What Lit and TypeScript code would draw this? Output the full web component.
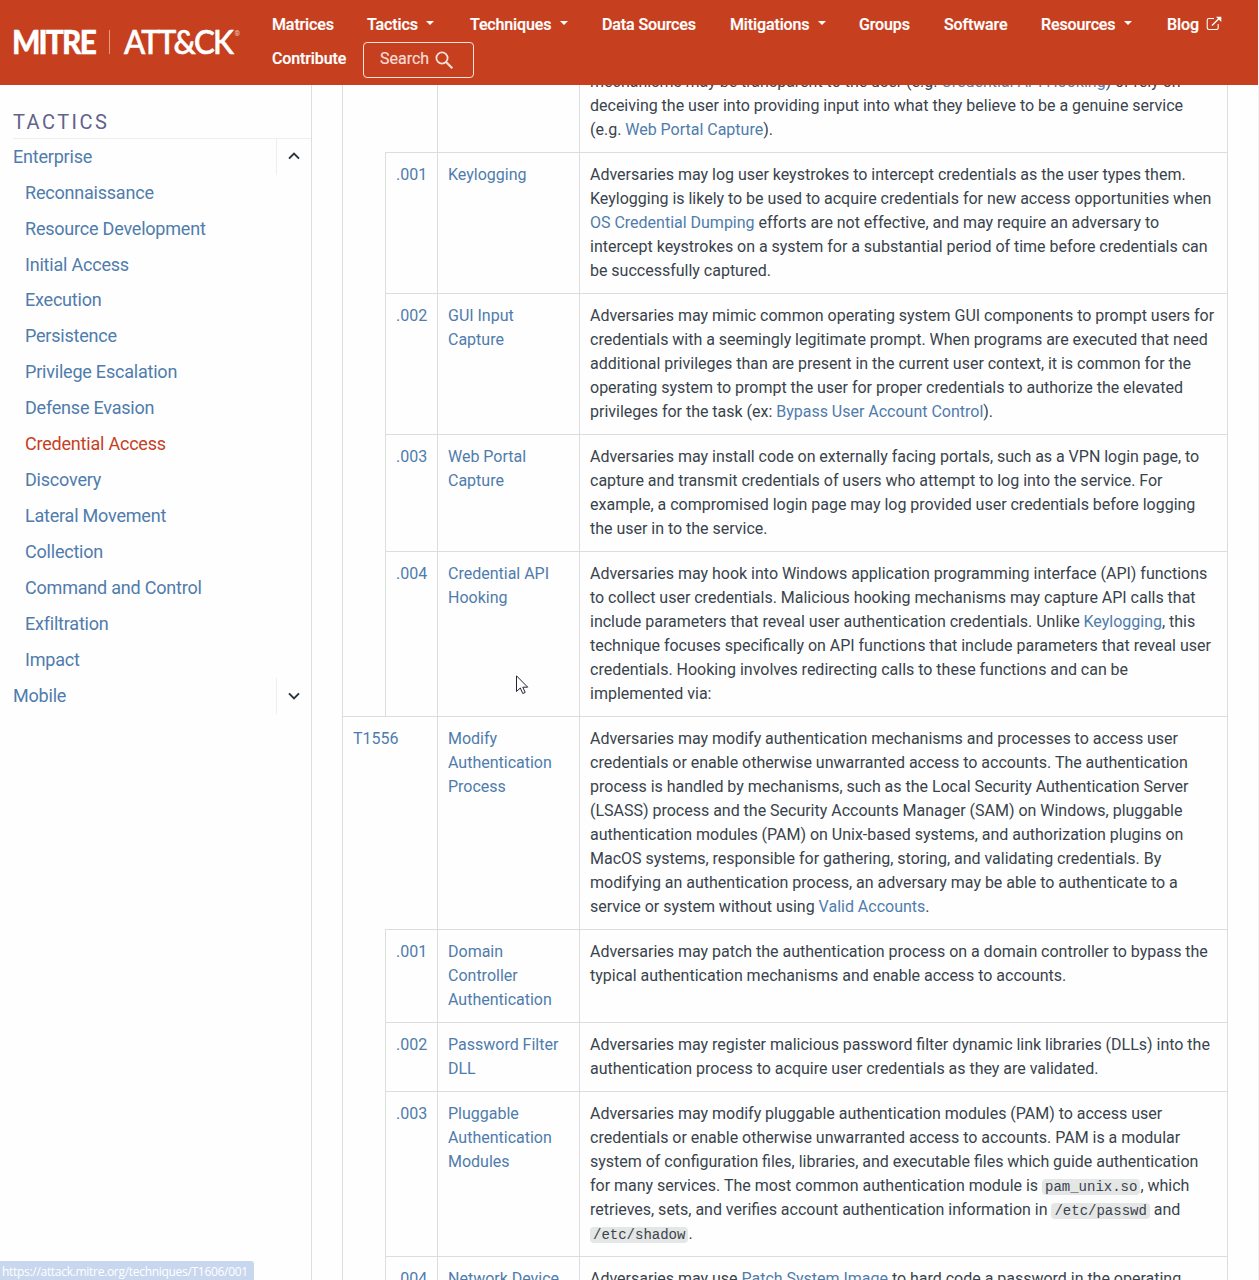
import { LitElement, html, css, svg, nothing, TemplateResult } from "lit";
import { customElement } from "lit/decorators.js";

const link = (t: string) => html`<a class="link">${t}</a>`;
const code = (t: string) => html`<code class="code">${t}</code>`;

interface NavItem { label: string; menu?: boolean; external?: boolean }

const NAV: NavItem[] = [
  { label: "Matrices" },
  { label: "Tactics", menu: true },
  { label: "Techniques", menu: true },
  { label: "Data Sources" },
  { label: "Mitigations", menu: true },
  { label: "Groups" },
  { label: "Software" },
  { label: "Resources", menu: true },
  { label: "Blog", external: true },
];

const TACTICS = [
  "Reconnaissance", "Resource Development", "Initial Access", "Execution", "Persistence",
  "Privilege Escalation", "Defense Evasion", "Credential Access", "Discovery",
  "Lateral Movement", "Collection", "Command and Control", "Exfiltration", "Impact",
];

type Line = string | TemplateResult;
interface Row { id: string; sub: boolean; name: string[]; text: Line[] }

const ROWS: Row[] = [
  { id: "", sub: false, name: [], text: [
    html`mechanisms may be transparent to the user (e.g. ${link("Credential API Hooking")}) or rely on`,
    "deceiving the user into providing input into what they believe to be a genuine service",
    html`(e.g. ${link("Web Portal Capture")}).`,
  ] },
  { id: ".001", sub: true, name: ["Keylogging"], text: [
    "Adversaries may log user keystrokes to intercept credentials as the user types them.",
    "Keylogging is likely to be used to acquire credentials for new access opportunities when",
    html`${link("OS Credential Dumping")} efforts are not effective, and may require an adversary to`,
    "intercept keystrokes on a system for a substantial period of time before credentials can",
    "be successfully captured.",
  ] },
  { id: ".002", sub: true, name: ["GUI Input", "Capture"], text: [
    "Adversaries may mimic common operating system GUI components to prompt users for",
    "credentials with a seemingly legitimate prompt. When programs are executed that need",
    "additional privileges than are present in the current user context, it is common for the",
    "operating system to prompt the user for proper credentials to authorize the elevated",
    html`privileges for the task (ex: ${link("Bypass User Account Control")}).`,
  ] },
  { id: ".003", sub: true, name: ["Web Portal", "Capture"], text: [
    "Adversaries may install code on externally facing portals, such as a VPN login page, to",
    "capture and transmit credentials of users who attempt to log into the service. For",
    "example, a compromised login page may log provided user credentials before logging",
    "the user in to the service.",
  ] },
  { id: ".004", sub: true, name: ["Credential API", "Hooking"], text: [
    "Adversaries may hook into Windows application programming interface (API) functions",
    "to collect user credentials. Malicious hooking mechanisms may capture API calls that",
    html`include parameters that reveal user authentication credentials. Unlike ${link("Keylogging")}, this`,
    "technique focuses specifically on API functions that include parameters that reveal user",
    "credentials. Hooking involves redirecting calls to these functions and can be",
    "implemented via:",
  ] },
  { id: "T1556", sub: false, name: ["Modify", "Authentication", "Process"], text: [
    "Adversaries may modify authentication mechanisms and processes to access user",
    "credentials or enable otherwise unwarranted access to accounts. The authentication",
    "process is handled by mechanisms, such as the Local Security Authentication Server",
    "(LSASS) process and the Security Accounts Manager (SAM) on Windows, pluggable",
    "authentication modules (PAM) on Unix-based systems, and authorization plugins on",
    "MacOS systems, responsible for gathering, storing, and validating credentials. By",
    "modifying an authentication process, an adversary may be able to authenticate to a",
    html`service or system without using ${link("Valid Accounts")}.`,
  ] },
  { id: ".001", sub: true, name: ["Domain", "Controller", "Authentication"], text: [
    "Adversaries may patch the authentication process on a domain controller to bypass the",
    "typical authentication mechanisms and enable access to accounts.",
  ] },
  { id: ".002", sub: true, name: ["Password Filter", "DLL"], text: [
    "Adversaries may register malicious password filter dynamic link libraries (DLLs) into the",
    "authentication process to acquire user credentials as they are validated.",
  ] },
  { id: ".003", sub: true, name: ["Pluggable", "Authentication", "Modules"], text: [
    "Adversaries may modify pluggable authentication modules (PAM) to access user",
    "credentials or enable otherwise unwarranted access to accounts. PAM is a modular",
    "system of configuration files, libraries, and executable files which guide authentication",
    html`for many services. The most common authentication module is ${code("pam_unix.so")}, which`,
    html`retrieves, sets, and verifies account authentication information in ${code("/etc/passwd")} and`,
    html`${code("/etc/shadow")}.`,
  ] },
  { id: ".004", sub: true, name: ["Network Device"], text: [
    html`Adversaries may use ${link("Patch System Image")} to hard code a password in the operating`,
  ] },
];

@customElement("app-root")
export class AppRoot extends LitElement {
  static styles = css`
    :host {
      display: flex; flex-direction: column; position: relative; box-sizing: border-box;
      height: 1280px; overflow: hidden; background: #fefefe; color: #39434c;
      border-right: 1px solid #f1f1f1;
      font: 16px/24px Roboto, "Liberation Sans", sans-serif;
    }
    * { box-sizing: border-box; }
    a { text-decoration: none; }
    .header {
      flex: none; height: 85px; background: #c63f1f; color: #fff;
      display: flex; z-index: 1;
    }
    .logo { flex: none; width: 272px; height: 85px; display: block; }
    .word { fill: #fff; stroke: #fff; font-family: Lato, sans-serif; font-size: 33px; }
    .heavy { font-weight: 900; stroke-width: 0.4; letter-spacing: -2px; }
    .semi { font-weight: 500; stroke-width: 0.6; letter-spacing: -2px; }
    .reg { fill: #fff; font-size: 7px; opacity: 0.7; }
    .nav { flex: 1; padding-top: 12px; font-weight: 500; }
    .nav-row {
      display: grid; height: 25px; line-height: 25px; white-space: nowrap;
      grid-template-columns: 95px 103px 132px 128px 129px 85px 97px 126px 80px;
    }
    .nav-item { display: flex; align-items: center; letter-spacing: -0.12px; -webkit-text-stroke: 0.2px #fff; }
    .caret {
      border: 4.5px solid transparent; border-top-color: #fff; border-bottom: 0;
      margin-left: 8.5px; margin-top: -3px;
    }
    .external { margin-left: 7px; margin-top: -2px; }
    .nav-second { display: flex; gap: 17px; margin-top: 5px; }
    .contribute { height: 34px; line-height: 34px; width: 74px; white-space: nowrap; }
    .search {
      display: flex; width: 111px; height: 36px; padding-left: 16px; align-items: center;
      border: 1px solid #fbe3dc; border-radius: 4px; color: #f7dcd4; font-weight: 400;
    }
    .search-label { margin-top: -3px; width: 50px; margin-right: 5px; -webkit-text-stroke: 0.2px #f7dcd4; }
    .body { flex: 1; min-height: 0; display: flex; }
    .sidebar { flex: none; width: 312px; border-right: 1px solid #dcddde; padding-left: 13px; }
    .heading {
      height: 54px; padding-top: 25px; border-bottom: 1px solid #eeeeef; color: #62628c;
      font-size: 20px; letter-spacing: 2.45px; font-weight: 400;
    }
    .group { display: flex; height: 36px; font-size: 18px; line-height: 36px; letter-spacing: -0.2px; }
    .group-name { flex: 1; }
    .toggle { width: 35px; border-left: 1px solid #eeeeef; display: flex; align-items: center; justify-content: center; }
    .link { color: #4f7cac; }
    .tactics { padding-left: 12px; margin-top: -0.34px; font-size: 18px; letter-spacing: -0.21px; }
    .tactic { display: block; height: 35.93px; line-height: 35.93px; color: #4f7cac; }
    .active { color: #c63f1f; }
    .main { flex: 1; min-width: 0; padding-left: 30px; overflow: hidden; word-spacing: -0.075px; }
    .table { width: 886px; margin-top: -26px; border-left: 1px solid #dcddde; border-right: 1px solid #dcddde; }
    .row { display: grid; grid-template-columns: 94px 142px 1fr; }
    .row.sub { grid-template-columns: 42px 52px 142px 1fr; }
    .cell { border-top: 1px solid #dcddde; border-left: 1px solid #dcddde; padding: 10px; white-space: nowrap; }
    .row:not(.sub) > .cell:first-child { border-left: 0; }
    .line { display: block; height: 24px; }
    .code {
      font: 14px/16px "Liberation Mono", monospace; background: #e5e6e6; border-radius: 4px;
      padding: 0 3px; display: inline-block; color: #39434c;
    }
    .status {
      position: absolute; left: 0; bottom: 0; width: 254px; height: 19px; padding-left: 2px;
      background: #c8d7ee; color: #fff; border-top-right-radius: 3px; letter-spacing: -0.3px;
      font: 12px/21px "Open Sans", sans-serif; white-space: nowrap;
    }
    .pointer { position: absolute; left: 516px; top: 675px; }
  `;

  private chevron(d: string) {
    return html`<svg width="14" height="10" viewBox="0 0 14 10">
      <path d=${d} fill="none" stroke="#2b333b" stroke-width="2" /></svg>`;
  }

  private nav(item: NavItem) {
    return html`<a class="nav-item">${item.label}${item.menu ? html`<span class="caret"></span>` : nothing}
      ${item.external
        ? html`<svg class="external" width="16" height="15" viewBox="0 0 16 15" fill="none" stroke="#fff">
            <path d="M8 2.5H3Q1.2 2.5 1.2 4.3V11.8Q1.2 13.5 3 13.5H10.5Q12.2 13.5 12.2 11.8V8" stroke-width="1.1" />
            <path d="M6 9.5L13.5 2" stroke-width="1.5" /><path d="M10 .7H15.3V6Z" fill="#fff" stroke="none" /></svg>`
        : nothing}</a>`;
  }

  private lines(lines: Line[]) {
    return lines.map((l) => html`<span class="line">${l}</span>`);
  }

  private row(r: Row) {
    return html`<div class="row ${r.sub ? "sub" : ""}">
      ${r.sub ? html`<div></div>` : nothing}
      <div class="cell">${link(r.id)}</div>
      <div class="cell link">${this.lines(r.name)}</div>
      <div class="cell">${this.lines(r.text)}</div>
    </div>`;
  }

  render() {
    return html`
      <header class="header">
        <svg class="logo" viewBox="0 0 272 85">
          ${svg`<text class="word heavy" x="12" y="53.5" textLength="83" lengthAdjust="spacingAndGlyphs">MITRE</text>
          <rect x="109" y="30" width="1" height="24" fill="#e79a80" />
          <text class="word semi" x="124" y="53.5" textLength="108" lengthAdjust="spacingAndGlyphs">ATT&amp;CK</text>
          <text class="reg" x="234.5" y="35.5">®</text>`}
        </svg>
        <nav class="nav">
          <div class="nav-row">${NAV.map((n) => this.nav(n))}</div>
          <div class="nav-second">
            <a class="nav-item contribute">Contribute</a>
            <div class="search"><span class="search-label">Search</span>
              <svg width="19" height="19" viewBox="0 0 19 19" fill="none" stroke="#f9e0d8">
                <circle cx="7" cy="7" r="5.6" stroke-width="1.8" /><path d="M11 11L17.3 17.3" stroke-width="2.2" />
              </svg>
            </div>
          </div>
        </nav>
      </header>
      <div class="body">
        <aside class="sidebar">
          <div class="heading">TACTICS</div>
          <div class="group"><a class="group-name link">Enterprise</a><span class="toggle">${this.chevron("M2 6.6L7 1.6L12 6.6")}</span></div>
          <div class="tactics">
            ${TACTICS.map((t) => html`<a class="tactic ${t === "Credential Access" ? "active" : ""}">${t}</a>`)}
          </div>
          <div class="group"><a class="group-name link">Mobile</a><span class="toggle">${this.chevron("M2 2.4L7 7.4L12 2.4")}</span></div>
        </aside>
        <main class="main"><div class="table">${ROWS.map((r) => this.row(r))}</div></main>
      </div>
      <div class="status">https://attack.mitre.org/techniques/T1606/001</div>
      <svg class="pointer" width="13" height="20" viewBox="0 0 13 20">
        <path d="M.5 .8V16.5L4.3 13L6.8 18.5L9.2 17.4L6.8 12.2H11.7Z" fill="#fff" stroke="#222631" />
      </svg>
    `;
  }
}
